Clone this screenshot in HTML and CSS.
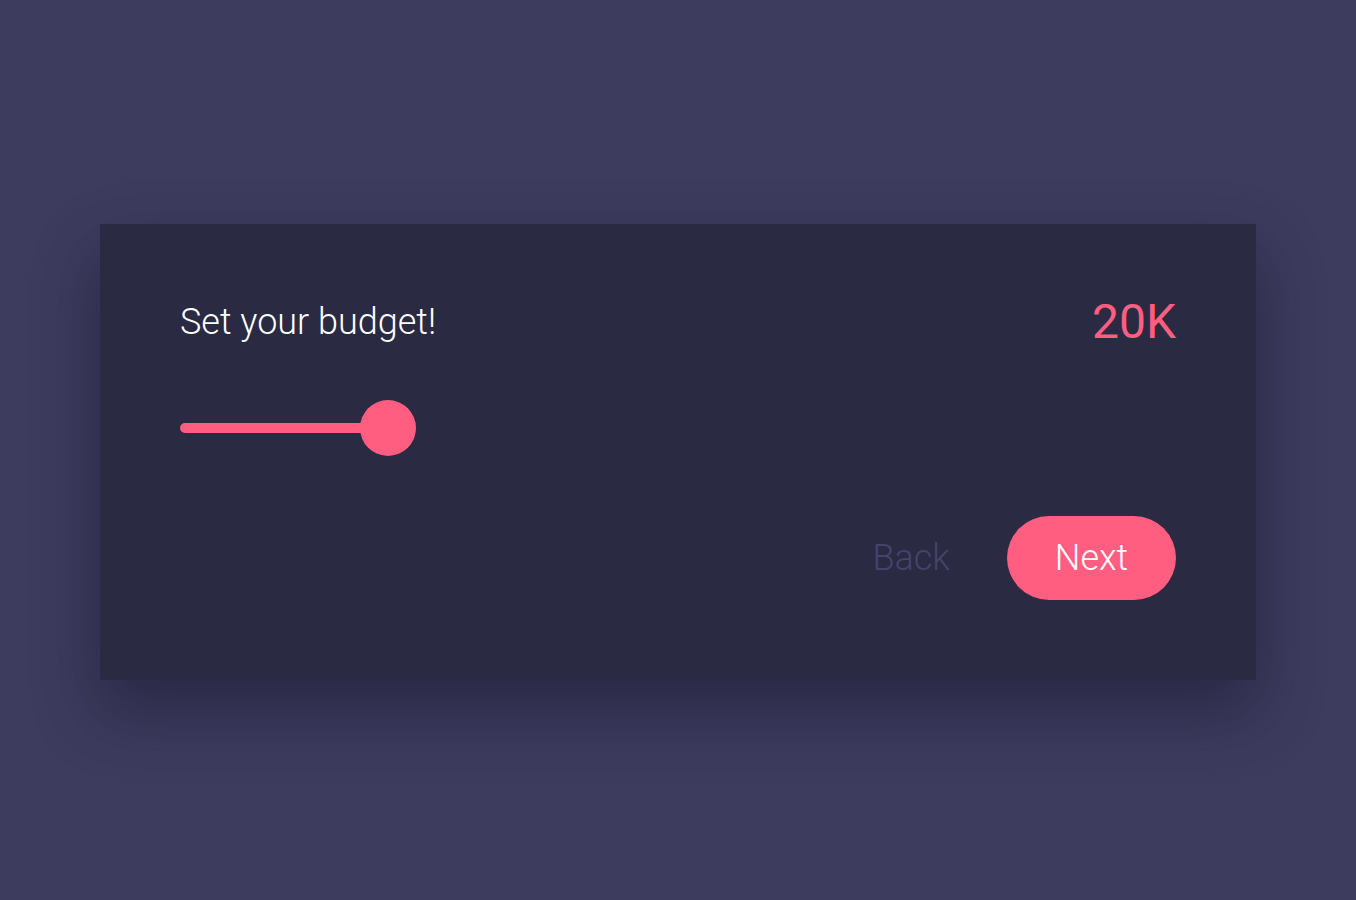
FILE: index.html
```html
<!DOCTYPE html>
<html lang="en">
<head>
<meta charset="UTF-8" />
<meta name="viewport" content="width=device-width, initial-scale=1" />
<title>Budget</title>
<link rel="stylesheet" href="styles.css">
</head>
<body>
  <div class="card">
    <!-- Heading and current value -->
    <div class="header">
      <div class="title">Set your budget!</div>
      <div class="value" id="value">20K</div>
    </div>

    <!-- Budget slider -->
    <div class="slider">
      <div class="track"></div>
      <div class="thumb"></div>
    </div>

    <!-- Navigation -->
    <div class="actions">
      <button class="back">Back</button>
      <button class="next">Next</button>
    </div>
  </div>
</body>
</html>
```

FILE: styles.css
```css
/* Budget step card */

body {
  background-color: #3d3b5e;
  font-family: Roboto, "Liberation Sans", sans-serif;
  display: flex;
  justify-content: center;
  align-items: center;
  height: 100vh;
  margin: 0;
}

.card {
  background-color: #2a2a42;
  width: 1156px;
  height: 456px;
  box-sizing: border-box;
  margin-top: 4px;
  padding: 74px 80px 80px;
  box-shadow: 0 30px 60px rgba(20, 18, 40, 0.45);
  display: flex;
  flex-direction: column;
}

.header {
  display: flex;
  justify-content: space-between;
  align-items: center;
  line-height: 1;
}

.title {
  color: #ffffff;
  font-size: 36px;
  font-weight: 300;
}

.value {
  color: #ff5e81;
  font-size: 48px;
  font-weight: 400;
}

/* Slider drawn as a track plus a round thumb */
.slider {
  display: flex;
  align-items: center;
  margin-top: 54px;
  height: 56px;
}

.track {
  width: 202px;
  height: 10px;
  border-radius: 5px;
  background-color: #ff5e81;
}

.thumb {
  width: 56px;
  height: 56px;
  border-radius: 50%;
  background-color: #ff5e81;
  margin-left: -22px;
}

.actions {
  margin-top: auto;
  display: flex;
  justify-content: flex-end;
  align-items: center;
  gap: 57px;
}

button {
  font-family: inherit;
  font-size: 36px;
  font-weight: 300;
  border: none;
  cursor: pointer;
}

button.back {
  background: none;
  color: #45436a;
  padding: 0;
}

button.next {
  background-color: #ff5e81;
  color: #ffffff;
  width: 169px;
  height: 84px;
  border-radius: 42px;
}
```
